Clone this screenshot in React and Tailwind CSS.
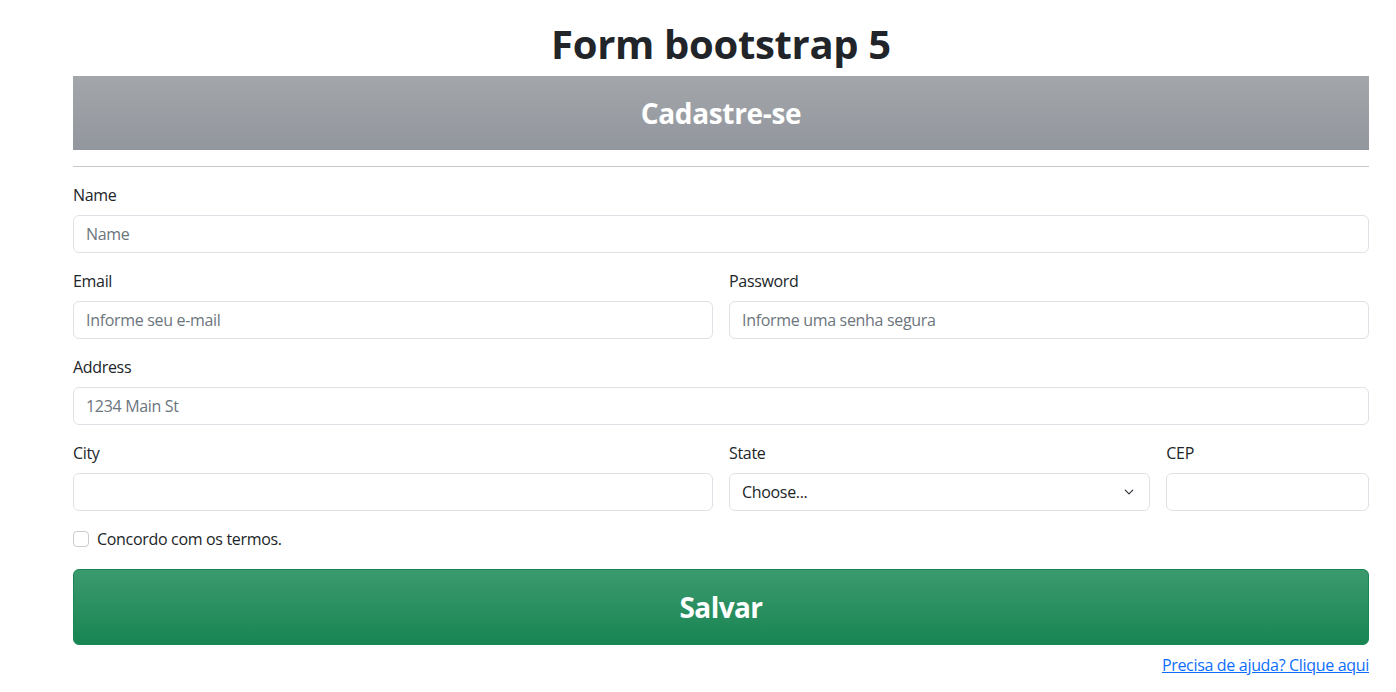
import React from "react";

export default function App() {
  const inputCls =
    "block w-full h-[38px] px-3 text-[16px] text-[#212529] bg-white border border-[#dee2e6] rounded-[6px] placeholder:text-[#6c757d] outline-none tracking-[-0.02em]";
  const labelCls = "block mb-2 text-[16px] leading-6 text-[#212529]";
  return (
    <div className="min-h-screen bg-white font-['Open_Sans',sans-serif] text-[#212529] tracking-[-0.02em]">
      <div className="ml-[73px] w-[1296px]">
        <h1 className="text-center text-[40px] leading-[48px] font-bold pt-[20px] pb-[8px]">
          Form bootstrap 5
        </h1>
        <div className="h-[74px] flex items-center justify-center bg-gradient-to-b from-[#a3a7ab] to-[#92969d]">
          <h3 className="text-white text-[28px] font-bold leading-[34px]">Cadastre-se</h3>
        </div>
        <hr className="my-4 border-0 border-t border-[#c8c9ca]" />
        <form className="grid grid-cols-12 gap-x-4 gap-y-4">
          <div className="col-span-12">
            <label className={labelCls}>Name</label>
            <input className={inputCls} placeholder="Name" />
          </div>
          <div className="col-span-6">
            <label className={labelCls}>Email</label>
            <input className={inputCls} placeholder="Informe seu e-mail" />
          </div>
          <div className="col-span-6">
            <label className={labelCls}>Password</label>
            <input className={inputCls} placeholder="Informe uma senha segura" />
          </div>
          <div className="col-span-12">
            <label className={labelCls}>Address</label>
            <input className={inputCls} placeholder="1234 Main St" />
          </div>
          <div className="col-span-6">
            <label className={labelCls}>City</label>
            <input className={inputCls} />
          </div>
          <div className="col-span-4">
            <label className={labelCls}>State</label>
            <div className="relative">
              <div className="flex items-center w-full h-[38px] px-3 text-[16px] text-[#212529] bg-white border border-[#dee2e6] rounded-[6px]">
                Choose...
              </div>
              <svg
                className="absolute right-[15px] top-[14px]"
                width="12"
                height="10"
                viewBox="0 0 16 16"
                fill="none"
                stroke="#343a40"
                strokeWidth="2"
                strokeLinecap="round"
                strokeLinejoin="round"
              >
                <path d="m2 5 6 6 6-6" />
              </svg>
            </div>
          </div>
          <div className="col-span-2">
            <label className={labelCls}>CEP</label>
            <input className={inputCls} />
          </div>
          <div className="col-span-12 flex items-center h-6">
            <span className="w-4 h-4 border border-[#c8ccd0] rounded-[4px] bg-white mr-2" />
            <span className="text-[16px] leading-6">Concordo com os termos.</span>
          </div>
          <div className="col-span-12 pt-[2px]">
            <button
              type="button"
              className="w-full h-[76px] rounded-[6px] border border-[#198754] bg-gradient-to-b from-[#3a9a6e] to-[#178553] text-white text-[28px] font-bold tracking-[-0.02em]"
            >
              Salvar
            </button>
          </div>
        </form>
        <div className="text-right mt-[8px]">
          <a href="#" className="text-[16px] leading-6 text-[#0d6efd] underline">
            Precisa de ajuda? Clique aqui
          </a>
        </div>
      </div>
    </div>
  );
}
